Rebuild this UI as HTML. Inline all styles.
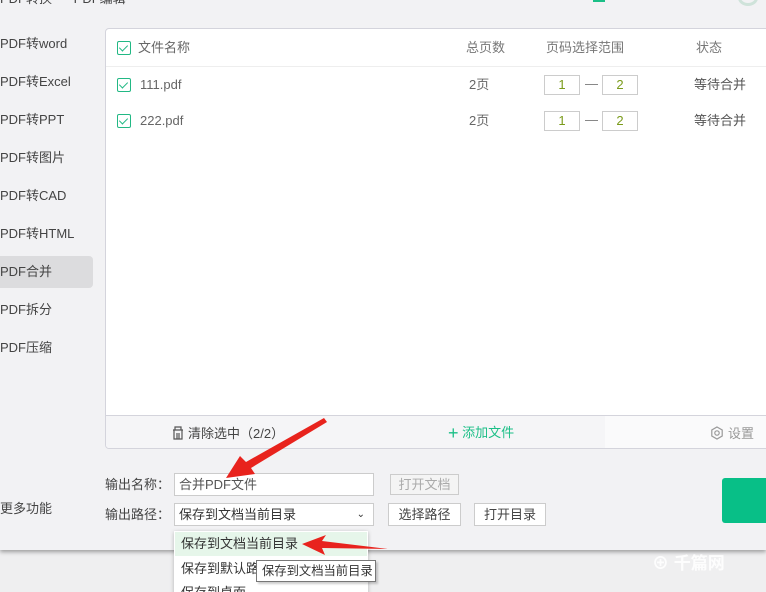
<!DOCTYPE html>
<html><head><meta charset="utf-8"><style>
*{margin:0;padding:0;box-sizing:border-box}
html{overflow:hidden;width:766px;height:592px}
body{width:766px;height:592px;overflow:hidden;position:relative;background:#efeff0;font-family:"Liberation Sans","Noto Sans CJK SC",sans-serif;font-size:13px;line-height:16px;color:#555}
.win{position:absolute;left:0;top:0;width:766px;height:550px;background:#f2f2f4;box-shadow:0 2px 4px rgba(0,0,0,.35)}
.a{position:absolute;white-space:nowrap}
.nav{left:0;font-size:13px;color:#444}
.panel{position:absolute;left:105px;top:28px;width:680px;height:421px;background:#fff;border:1px solid #d4d4dc;border-radius:4px;overflow:hidden}
.cb{position:absolute;width:14px;height:14px;border:1.5px solid #22b884;border-radius:2px}
.cb:after{content:"";position:absolute;left:3px;top:1px;width:4px;height:7px;border:solid #22b884;border-width:0 1.5px 1.5px 0;transform:rotate(45deg)}
.box{position:absolute;width:36px;height:20px;border:1px solid #ccc;background:#fff;text-align:center;line-height:18px;color:#7a9b1a;font-size:13px}
.inp{position:absolute;background:#fff;border:1px solid #ccc;height:23px;line-height:21px;padding-left:4px;color:#555}
.btn{position:absolute;background:#fff;border:1px solid #ccc;height:23px;line-height:21px;text-align:center;color:#444}
</style></head><body>
<div class="win">
<div class="a" style="left:0;top:-9px;font-size:13px;color:#444">PDF转换 &nbsp;&nbsp;&nbsp;&nbsp;&nbsp;PDF编辑</div>
<div class="a" style="left:593px;top:-6px;width:12px;height:8px;background:#1cbf87"></div>
<div class="a" style="left:738px;top:-10px;width:20px;height:16px;border:3px solid #cfe3da;border-radius:50%"></div>
<div class="a nav" style="top:36px">PDF转word</div>
<div class="a nav" style="top:74px">PDF转Excel</div>
<div class="a nav" style="top:112px">PDF转PPT</div>
<div class="a nav" style="top:150px">PDF转图片</div>
<div class="a nav" style="top:188px">PDF转CAD</div>
<div class="a nav" style="top:226px">PDF转HTML</div>
<div class="a" style="left:0;top:256px;width:93px;height:32px;background:#dcdcde;border-radius:0 4px 4px 0"></div>
<div class="a nav" style="top:264px">PDF合并</div>
<div class="a nav" style="top:302px">PDF拆分</div>
<div class="a nav" style="top:340px">PDF压缩</div>
<div class="a nav" style="top:501px">更多功能</div>

<div class="panel">
<div class="a" style="left:0;top:37px;width:100%;height:1px;background:#eee"></div>
<div class="cb" style="left:11px;top:12px"></div><div class="a" style="left:32px;top:11px;color:#666">文件名称</div>
<div class="a" style="left:360px;top:11px;color:#777">总页数</div>
<div class="a" style="left:440px;top:11px;color:#777">页码选择范围</div>
<div class="a" style="left:590px;top:11px;color:#777">状态</div>
<div class="cb" style="left:11px;top:49px"></div><div class="a" style="left:34px;top:48px;color:#666">111.pdf</div>
<div class="a" style="left:363px;top:48px;color:#666">2页</div>
<div class="box" style="left:438px;top:46px">1</div><div class="a" style="left:479px;top:47px;color:#777">—</div><div class="box" style="left:496px;top:46px">2</div>
<div class="a" style="left:588px;top:48px;color:#555">等待合并</div>
<div class="cb" style="left:11px;top:85px"></div><div class="a" style="left:34px;top:84px;color:#666">222.pdf</div>
<div class="a" style="left:363px;top:84px;color:#666">2页</div>
<div class="box" style="left:438px;top:82px">1</div><div class="a" style="left:479px;top:83px;color:#777">—</div><div class="box" style="left:496px;top:82px">2</div>
<div class="a" style="left:588px;top:84px;color:#555">等待合并</div>
<div class="a" style="left:0;top:386px;width:100%;height:34px;background:#f5f5f7;border-top:1px solid #d4d4dc"></div>
<div class="a" style="left:499px;top:387px;width:180px;height:33px;background:#fafafb"></div>
<svg class="a" style="left:66px;top:397px" width="12" height="14" viewBox="0 0 12 14"><path d="M3 1h6v3H3zM1 4h10M2 4v9h8V4M5 7v6M7 7v6" fill="none" stroke="#555" stroke-width="1.2"/></svg>
<div class="a" style="left:82px;top:397px;color:#444">清除选中（2/2）</div>
<div class="a" style="left:342px;top:396px;color:#1cbf87"><span style="font-size:18px;vertical-align:-2px">+</span> 添加文件</div>
<svg class="a" style="left:604px;top:397px" width="14" height="14" viewBox="0 0 14 14"><path d="M7 1l5.2 3v6L7 13 1.8 10V4z" fill="none" stroke="#999" stroke-width="1.2"/><circle cx="7" cy="7" r="2.2" fill="none" stroke="#999" stroke-width="1.2"/></svg>
<div class="a" style="left:622px;top:397px;color:#999">设置</div>
</div>

<div class="a" style="left:105px;top:477px;color:#444">输出名称：</div>
<div class="inp" style="left:174px;top:473px;width:200px">合并PDF文件</div>
<div class="btn" style="left:390px;top:474px;width:69px;height:21px;line-height:19px;color:#aaa;background:#f4f4f4">打开文档</div>
<div class="a" style="left:105px;top:507px;color:#444">输出路径：</div>
<div class="inp" style="left:174px;top:503px;width:200px;color:#333">保存到文档当前目录<span style="position:absolute;right:8px;font-size:10px">⌄</span></div>
<div class="btn" style="left:388px;top:503px;width:73px">选择路径</div>
<div class="btn" style="left:474px;top:503px;width:72px">打开目录</div>
<div class="a" style="left:722px;top:478px;width:50px;height:45px;background:#08bf87;border-radius:3px"></div>
</div>

<div class="a" style="left:174px;top:531px;width:194px;height:70px;background:#fff;box-shadow:0 1px 4px rgba(0,0,0,.25)"></div>
<div class="a" style="left:175px;top:532px;width:192px;height:24px;background:#e6f6ea"></div>
<div class="a" style="left:181px;top:536px;color:#333">保存到文档当前目录</div>
<div class="a" style="left:181px;top:561px;color:#333">保存到默认路径</div>
<div class="a" style="left:181px;top:585px;color:#333">保存到桌面</div>
<div class="a" style="left:256px;top:560px;width:120px;height:22px;background:#fff;border:1px solid #777;box-shadow:2px 2px 2px rgba(0,0,0,.2);padding:2px 0 0 5px;color:#333;font-size:12.3px">保存到文档当前目录</div>
<div class="a" style="left:652px;top:554px;color:#fff;font-size:17px;line-height:20px;font-weight:bold;opacity:.9">⊕ 千篇网</div>
<svg class="a" style="left:0;top:0" width="766" height="592">
<polygon points="324,418 327,422 251,468 255,474 226,478 240,456 246,462" fill="#e8231d"/>
<polygon points="302,544 326,535 322,541 388,549 322,548 325,555" fill="#e8231d"/>
</svg>
</body></html>
